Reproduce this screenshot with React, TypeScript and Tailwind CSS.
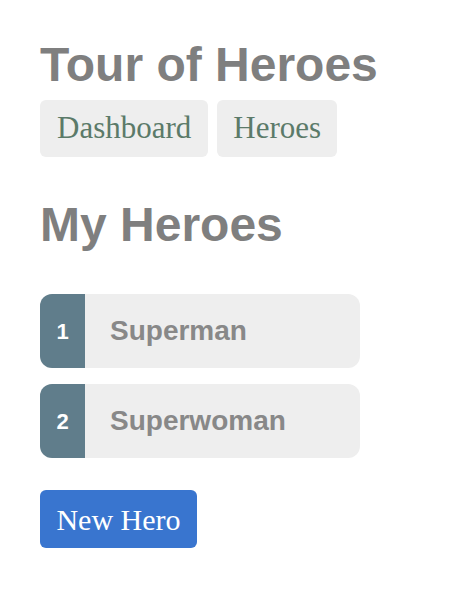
import React from "react";

const heroes = [
  { id: 1, name: "Superman" },
  { id: 2, name: "Superwoman" },
];

export default function App() {
  return (
    <div className="min-h-[610px] bg-white p-[40px] pt-[40px]">
      <h1
        className="text-[48px] font-bold leading-[50px] text-[#7f7f7f]"
        style={{ fontFamily: '"Liberation Sans", Arial, sans-serif' }}
      >
        Tour of Heroes
      </h1>
      <nav
        className="mt-[10px] flex gap-[9px]"
        style={{ fontFamily: '"Liberation Serif", "Times New Roman", serif' }}
      >
        <a className="flex h-[57px] items-center rounded-[6px] bg-[#eeeeee] px-[17px] text-[31px] text-[#5b7a69]">
          Dashboard
        </a>
        <a className="flex h-[57px] items-center rounded-[6px] bg-[#eeeeee] px-[16px] text-[31px] text-[#5b7a69]">
          Heroes
        </a>
      </nav>
      <h2
        className="mt-[43px] text-[48px] font-bold leading-[50px] text-[#7f7f7f]"
        style={{ fontFamily: '"Liberation Sans", Arial, sans-serif' }}
      >
        My Heroes
      </h2>
      <ul
        className="mt-[44px] flex w-[320px] flex-col gap-[16px]"
        style={{ fontFamily: '"Liberation Sans", Arial, sans-serif' }}
      >
        {heroes.map((h) => (
          <li
            key={h.id}
            className="flex h-[74px] overflow-hidden rounded-[12px] bg-[#eeeeee]"
          >
            <span className="flex w-[45px] items-center justify-center bg-[#607d8b] text-[22px] font-bold text-white">
              {h.id}
            </span>
            <span className="flex items-center pl-[25px] text-[28px] font-bold text-[#888888]">
              {h.name}
            </span>
          </li>
        ))}
      </ul>
      <button
        className="mt-[32px] flex h-[58px] w-[157px] items-center justify-center rounded-[6px] bg-[#3975cf] text-[30px] text-white"
        style={{ fontFamily: '"Liberation Serif", "Times New Roman", serif' }}
      >
        New Hero
      </button>
    </div>
  );
}
